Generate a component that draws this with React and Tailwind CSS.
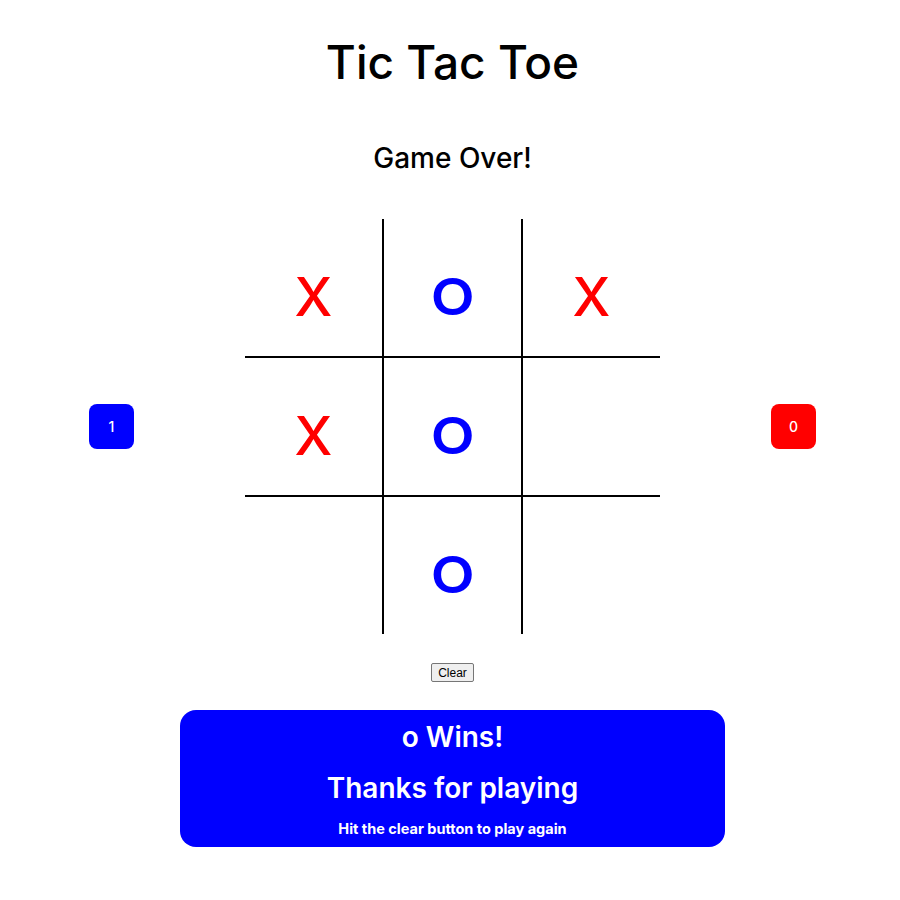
import React from "react";

const board = ["X", "O", "X", "X", "O", "", "", "O", ""];

function Cell({ v, i }) {
  const col = i % 3;
  const row = Math.floor(i / 3);
  const cls = [
    "flex items-center justify-center pt-[18px] leading-none",
    col < 2 ? "border-r-2 border-black" : "",
    row < 2 ? "border-b-2 border-black" : "",
    v === "X" ? "text-[#ff0000] text-[54px] font-medium" : "text-[#0000ff] text-[51px] font-semibold",
  ].join(" ");
  return (
    <div className={cls} style={{ width: col < 2 ? 139 : 137, height: row < 2 ? 139 : 137 }}>
      {v === "O" ? <span className="inline-block scale-x-[1.12]">O</span> : v}
    </div>
  );
}

export default function App() {
  return (
    <div className="w-[905px] bg-white min-h-[900px] flex flex-col items-center text-black" style={{ fontFamily: "Inter, 'Open Sans', sans-serif" }}>
      <h1 className="mt-[36px] text-[46px] font-medium leading-[52px]">Tic Tac Toe</h1>
      <h2 className="mt-[54px] text-[28px] font-medium leading-[32px]">Game Over!</h2>
      <div className="mt-[45px] flex items-center gap-[111px]">
        <div className="w-[45px] h-[45px] rounded-[8px] bg-[#0000ff] text-white text-[14px] font-medium flex items-center justify-center">1</div>
        <div className="grid grid-cols-[139px_139px_137px] w-[415px]">
          {board.map((v, i) => (
            <Cell key={i} v={v} i={i} />
          ))}
        </div>
        <div className="w-[45px] h-[45px] rounded-[8px] bg-[#ff0000] text-white text-[14px] font-medium flex items-center justify-center">0</div>
      </div>
      <button className="mt-[29px] h-[19px] px-[6px] text-[12px] leading-none bg-[#efefef] border border-[#767676] rounded-[2px] text-black" style={{ fontFamily: "'Liberation Sans', Arial, sans-serif" }}>Clear</button>
      <div className="mt-[28px] w-[545px] h-[137px] rounded-[16px] bg-[#0000ff] text-white flex flex-col items-center">
        <div className="mt-[10px] text-[28px] font-semibold leading-[34px]">o Wins!</div>
        <div className="mt-[17px] text-[28px] font-semibold leading-[34px]">Thanks for playing</div>
        <div className="mt-[15px] text-[14.5px] font-bold leading-[18px]">Hit the clear button to play again</div>
      </div>
    </div>
  );
}
